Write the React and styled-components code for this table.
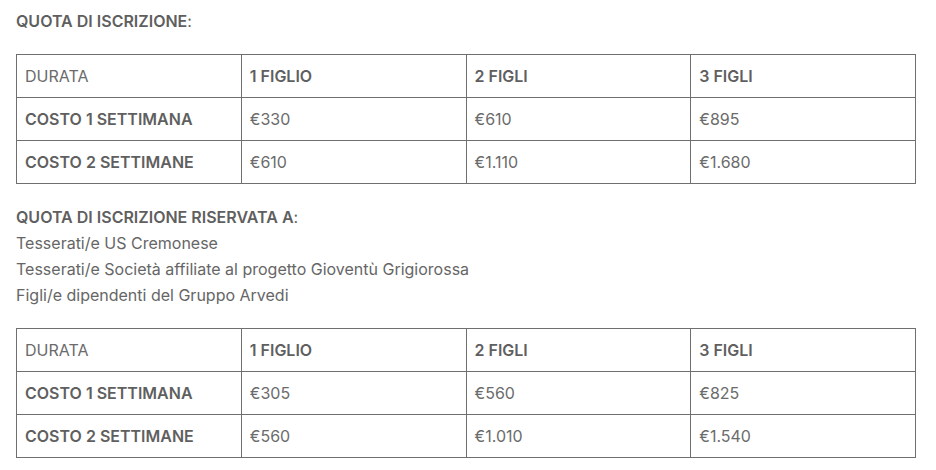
import React from "react"
import styled, { createGlobalStyle } from "styled-components"

const GlobalStyle = createGlobalStyle`
  body {
    margin: 0;
    background: #ffffff;
  }
`

const prices = [
  {
    title: "QUOTA DI ISCRIZIONE",
    rows: [
      ["COSTO 1 SETTIMANA", "€330", "€610", "€895"],
      ["COSTO 2 SETTIMANE", "€610", "€1.110", "€1.680"],
    ],
  },
  {
    title: "QUOTA DI ISCRIZIONE RISERVATA A",
    notes: [
      "Tesserati/e US Cremonese",
      "Tesserati/e Società affiliate al progetto Gioventù Grigiorossa",
      "Figli/e dipendenti del Gruppo Arvedi",
    ],
    rows: [
      ["COSTO 1 SETTIMANA", "€305", "€560", "€825"],
      ["COSTO 2 SETTIMANE", "€560", "€1.010", "€1.540"],
    ],
  },
]

const App = () => {
  return (
    <Page>
      <GlobalStyle />
      {prices.map((block, key) => {
        return (
          <Section key={key}>
            <Intro>
              <div>
                <Title>{block.title}</Title>:
              </div>
              {block.notes?.map((note, index) => {
                return <Note key={index}>{note}</Note>
              })}
            </Intro>
            <Table>
              <colgroup>
                <col />
                <col />
                <col />
                <col />
              </colgroup>
              <tbody>
                <tr>
                  <Cell>DURATA</Cell>
                  <Cell bold>1 FIGLIO</Cell>
                  <Cell bold>2 FIGLI</Cell>
                  <Cell bold>3 FIGLI</Cell>
                </tr>
                {block.rows.map((row, index) => {
                  return (
                    <tr key={index}>
                      {row.map((value, i) => {
                        return (
                          <Cell key={i} bold={i === 0}>
                            {value}
                          </Cell>
                        )
                      })}
                    </tr>
                  )
                })}
              </tbody>
            </Table>
          </Section>
        )
      })}
    </Page>
  )
}
export default App

const Page = styled.div`
  padding: 8px 16px 12px 16px;
  width: 900px;
  font-family: Inter, "Noto Sans", sans-serif;
  font-size: 16px;
  line-height: 26px;
  color: #666666;
  display: flex;
  flex-direction: column;
  gap: 20px;
`
const Section = styled.div`
  display: flex;
  flex-direction: column;
  gap: 20px;
`
const Intro = styled.div`
  display: flex;
  flex-direction: column;
`
const Title = styled.strong`
  font-weight: 600;
  color: #5f5f5f;
`
const Note = styled.div``
const Table = styled.table`
  width: 900px;
  border-collapse: collapse;
  table-layout: fixed;
  border: 1px solid #6f6f6f;
  col {
    width: 25%;
  }
`
const Cell = styled.td`
  border: 1px solid #6f6f6f;
  padding: 8px 8px;
  line-height: 26px;
  text-align: left;
  font-weight: ${(p) => (p.bold ? 600 : 400)};
  color: ${(p) => (p.bold ? "#5f5f5f" : "#6b6b6b")};
`
